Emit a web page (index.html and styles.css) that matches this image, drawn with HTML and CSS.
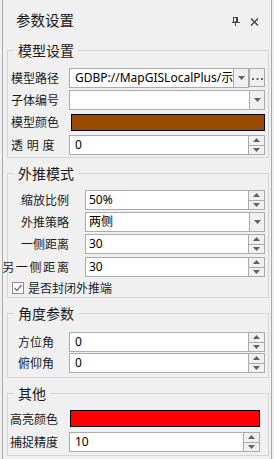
FILE: index.html
```html
<!DOCTYPE html>
<html lang="zh-CN">
<head>
<meta charset="utf-8">
<title>参数设置</title>
<link rel="stylesheet" href="styles.css">
</head>
<body>
<div class="panel">
  <div class="titlebar">
    <span class="title">参数设置</span>
    <span class="tools">
      <svg class="pin" width="8" height="9" viewBox="0 0 8 9"><rect x="1.5" y="0.5" width="4" height="4.5" fill="none" stroke="#444" stroke-width="1"/><rect x="4" y="0" width="2" height="5" fill="#444"/><rect x="0" y="5" width="8" height="1" fill="#444"/><rect x="3" y="6" width="1" height="3" fill="#444"/></svg>
      <svg class="close" width="9" height="8" viewBox="0 0 9 8"><path d="M1 0.5 L8 7.5 M8 0.5 L1 7.5" stroke="#444" stroke-width="1.4" fill="none"/></svg>
    </span>
  </div>

  <fieldset class="group g1">
    <legend>模型设置</legend>
    <div class="row">
      <span class="lbl">模型路径</span>
      <div class="field">
        <span class="txt">GDBP://MapGISLocalPlus/示例</span>
        <span class="dd"><svg width="7" height="4" viewBox="0 0 7 4"><path d="M0 0 H7 L3.5 4 Z" fill="#606060"/></svg></span>
      </div>
      <span class="ell"><svg width="11" height="2" viewBox="0 0 11 2"><rect x="0" y="0" width="2" height="2" fill="#666"/><rect x="4.5" y="0" width="2" height="2" fill="#666"/><rect x="9" y="0" width="2" height="2" fill="#666"/></svg></span>
    </div>
    <div class="row gap2">
      <span class="lbl">子体编号</span>
      <div class="field">
        <span class="txt"></span>
        <span class="dd"><svg width="7" height="4" viewBox="0 0 7 4"><path d="M0 0 H7 L3.5 4 Z" fill="#606060"/></svg></span>
      </div>
    </div>
    <div class="row gap2">
      <span class="lbl">模型颜色</span>
      <span class="swatch brown"></span>
    </div>
    <div class="row gap3">
      <span class="lbl spaced">透 明 度</span>
      <div class="field">
        <span class="txt">0</span>
        <span class="spin"><span class="up"><svg width="7" height="4" viewBox="0 0 7 4"><path d="M0 4 H7 L3.5 0 Z" fill="#606060"/></svg></span><span class="down"><svg width="7" height="4" viewBox="0 0 7 4"><path d="M0 0 H7 L3.5 4 Z" fill="#606060"/></svg></span></span>
      </div>
    </div>
  </fieldset>

  <fieldset class="group g2">
    <legend>外推模式</legend>
    <div class="row">
      <span class="lbl"><span>缩放比例</span></span>
      <div class="field">
        <span class="txt">50%</span>
        <span class="spin"><span class="up"><svg width="7" height="4" viewBox="0 0 7 4"><path d="M0 4 H7 L3.5 0 Z" fill="#606060"/></svg></span><span class="down"><svg width="7" height="4" viewBox="0 0 7 4"><path d="M0 0 H7 L3.5 4 Z" fill="#606060"/></svg></span></span>
      </div>
    </div>
    <div class="row gap2">
      <span class="lbl"><span>外推策略</span></span>
      <div class="field">
        <span class="txt">两侧</span>
        <span class="dd"><svg width="7" height="4" viewBox="0 0 7 4"><path d="M0 0 H7 L3.5 4 Z" fill="#606060"/></svg></span>
      </div>
    </div>
    <div class="row gap2">
      <span class="lbl"><span>一侧距离</span></span>
      <div class="field">
        <span class="txt">30</span>
        <span class="spin"><span class="up"><svg width="7" height="4" viewBox="0 0 7 4"><path d="M0 4 H7 L3.5 0 Z" fill="#606060"/></svg></span><span class="down"><svg width="7" height="4" viewBox="0 0 7 4"><path d="M0 0 H7 L3.5 4 Z" fill="#606060"/></svg></span></span>
      </div>
    </div>
    <div class="row gap3">
      <span class="lbl"><span class="wide">另一侧距离</span></span>
      <div class="field">
        <span class="txt">30</span>
        <span class="spin"><span class="up"><svg width="7" height="4" viewBox="0 0 7 4"><path d="M0 4 H7 L3.5 0 Z" fill="#606060"/></svg></span><span class="down"><svg width="7" height="4" viewBox="0 0 7 4"><path d="M0 0 H7 L3.5 4 Z" fill="#606060"/></svg></span></span>
      </div>
    </div>
    <div class="check">
      <svg class="box" width="12" height="12" viewBox="0 0 12 12"><rect x="0.5" y="0.5" width="11" height="11" fill="#fdfdfd" stroke="#8f8f8f"/><path d="M2.5 6 L5 8.5 L9.5 3" fill="none" stroke="#707070" stroke-width="1.3"/></svg>
      <span>是否封闭外推端</span>
    </div>
  </fieldset>

  <fieldset class="group g3">
    <legend>角度参数</legend>
    <div class="row">
      <span class="lbl">方位角</span>
      <div class="field">
        <span class="txt">0</span>
        <span class="spin"><span class="up"><svg width="7" height="4" viewBox="0 0 7 4"><path d="M0 4 H7 L3.5 0 Z" fill="#606060"/></svg></span><span class="down"><svg width="7" height="4" viewBox="0 0 7 4"><path d="M0 0 H7 L3.5 4 Z" fill="#606060"/></svg></span></span>
      </div>
    </div>
    <div class="row gap1">
      <span class="lbl">俯仰角</span>
      <div class="field">
        <span class="txt">0</span>
        <span class="spin"><span class="up"><svg width="7" height="4" viewBox="0 0 7 4"><path d="M0 4 H7 L3.5 0 Z" fill="#606060"/></svg></span><span class="down"><svg width="7" height="4" viewBox="0 0 7 4"><path d="M0 0 H7 L3.5 4 Z" fill="#606060"/></svg></span></span>
      </div>
    </div>
  </fieldset>

  <fieldset class="group g4">
    <legend>其他</legend>
    <div class="row short">
      <span class="lbl">高亮颜色</span>
      <span class="swatch red"></span>
    </div>
    <div class="row gap5">
      <span class="lbl">捕捉精度</span>
      <div class="field">
        <span class="txt">10</span>
        <span class="spin"><span class="up"><svg width="7" height="4" viewBox="0 0 7 4"><path d="M0 4 H7 L3.5 0 Z" fill="#606060"/></svg></span><span class="down"><svg width="7" height="4" viewBox="0 0 7 4"><path d="M0 0 H7 L3.5 4 Z" fill="#606060"/></svg></span></span>
      </div>
    </div>
  </fieldset>
</div>
</body>
</html>
```

FILE: styles.css
```css
* { box-sizing: border-box; }
html, body { margin: 0; padding: 0; }
body {
  width: 274px;
  height: 459px;
  overflow: hidden;
  background: #f0f0f0;
  font-family: "Noto Sans", "Noto Sans CJK SC", sans-serif;
  font-size: 12px;
  color: #1a1a1a;
}
.panel {
  margin-left: 2px;
  width: 270px;
  height: 459px;
  border-left: 1px solid #a9a9a9;
  border-right: 1px solid #a9a9a9;
}
.titlebar {
  height: 40px;
  display: flex;
  align-items: center;
  padding-left: 13px;
  padding-right: 12px;
}
.title {
  font-family: "Noto Sans CJK SC", sans-serif;
  font-size: 14.5px;
  line-height: 20px;
  flex: 1;
  padding-top: 0;
}
.tools { display: flex; align-items: center; gap: 10px; padding-top: 3px; }
.pin, .close { display: block; }

.group {
  margin: 5px 2px 0 4px;
  padding: 0 3px 2px 0;
  border: 1px solid #d4d4d4;
  min-width: 0;
}
.group legend {
  margin-left: 6px;
  padding: 0 4px;
  height: 20px;
  font-family: "Noto Sans CJK SC", sans-serif;
  font-size: 14px;
  line-height: 20px;
  color: #1a1a1a;
}
.g1 { margin-top: 0; padding-top: 8px; }
.g2 { padding-top: 7px; padding-bottom: 0; }
.g3 { padding-top: 9px; padding-bottom: 4px; }
.g4 { padding-top: 7px; padding-bottom: 3px; padding-right: 8px; }

.row {
  display: flex;
  align-items: center;
  height: 20px;
}
.gap1 { margin-top: 1px; }
.gap2 { margin-top: 2px; }
.gap3 { margin-top: 3px; }
.gap5 { margin-top: 5px; }
.row.short { height: 17px; }

.lbl {
  width: 61px;
  flex: none;
  white-space: nowrap;
  font-family: "Noto Sans CJK SC", sans-serif;
  font-size: 12px;
  line-height: 18px;
}
.g1 .lbl { padding-left: 3px; }
.spaced { word-spacing: 1px; }
.g2 .lbl { display: flex; justify-content: flex-end; margin-right: 16px; }
.g2 .lbl .wide { letter-spacing: 1.7px; margin-right: -1.7px; }
.g3 .lbl { padding-left: 10px; }
.g4 .lbl { padding-left: 2px; }

.field {
  flex: 1;
  min-width: 0;
  height: 20px;
  display: flex;
  border: 1px solid #ababab;
  background: #fff;
}
.txt {
  flex: 1;
  min-width: 0;
  padding-left: 5px;
  line-height: 18px;
  white-space: nowrap;
  overflow: hidden;
  color: #000;
}
.g2 .txt { padding-left: 3px; }
.dd {
  width: 15px;
  flex: none;
  border-left: 1px solid #ababab;
  background: #f0f0f0;
  display: flex;
  align-items: center;
  justify-content: center;
}
.ell {
  width: 16px;
  height: 19px;
  flex: none;
  border: 1px solid #ababab;
  background: #f0f0f0;
  display: flex;
  align-items: center;
  justify-content: center;
  margin-top: -1px;
}
.ell svg { margin-top: 2px; }
.spin {
  width: 16px;
  flex: none;
  border-left: 1px solid #ababab;
  display: flex;
  flex-direction: column;
  background: #f0f0f0;
}
.spin .up, .spin .down {
  flex: 1;
  display: flex;
  align-items: center;
  justify-content: center;
}
.spin .down { border-top: 1px solid #ababab; }

.swatch {
  flex: 1;
  height: 17px;
  border: 1px solid #000;
  margin-left: 2px;
}
.brown { background: #9a4a00; }
.red { background: #ff0000; margin-left: 1px; }

.check {
  display: flex;
  align-items: center;
  height: 18px;
  margin-top: 2px;
  padding-left: 4px;
  font-family: "Noto Sans CJK SC", sans-serif;
}
.check .box { display: block; flex: none; }
.check span { margin-left: 4px; line-height: 18px; }
```
